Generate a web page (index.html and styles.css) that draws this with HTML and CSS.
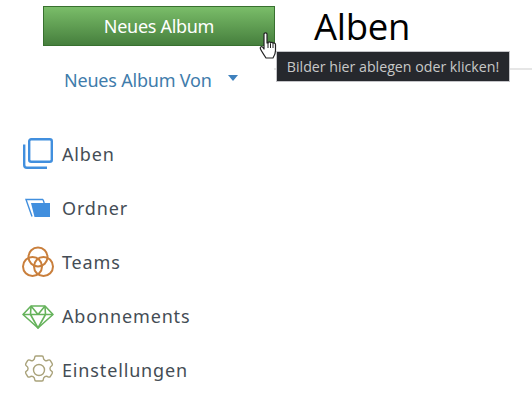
FILE: index.html
```html
<!DOCTYPE html>
<html lang="de">
<head>
  <meta charset="UTF-8">
  <title>Alben</title>
  <link rel="stylesheet" href="styles.css">
</head>
<body>
  <div class="page">
    <aside class="sidebar">
      <button class="new-album">Neues Album</button>
      <div class="new-from">
        <span>Neues Album Von</span>
        <span class="caret"></span>
      </div>
      <nav class="nav">
        <a class="nav-item">
          <svg class="nav-icon" width="32" height="32" viewBox="0 0 32 32" fill="none" stroke="#418fde" stroke-width="2.4">
            <rect x="7.2" y="1.2" width="22.6" height="22.6" rx="2"/>
            <path d="M2.2 6.5V27c0 1.7 1 2.8 2.8 2.8h20"/>
          </svg>
          <span>Alben</span>
        </a>
        <a class="nav-item">
          <svg class="nav-icon" width="32" height="32" viewBox="0 0 32 32">
            <path d="M21 7.500H4l6 17M21 7.500l1.200 3.500" fill="none" stroke="#418fde" stroke-width="1.400"/>
            <path d="M9 11h19v14H12.500z" fill="#418fde"/>
          </svg>
          <span>Ordner</span>
        </a>
        <a class="nav-item">
          <svg class="nav-icon" width="32" height="32" viewBox="0 0 32 32" fill="none" stroke="#c97f3c" stroke-width="2">
            <circle cx="16" cy="11" r="9.500"/>
            <circle cx="10.500" cy="20.500" r="9.500"/>
            <circle cx="21.500" cy="20.500" r="9.500"/>
          </svg>
          <span>Teams</span>
        </a>
        <a class="nav-item">
          <svg class="nav-icon" width="32" height="32" viewBox="0 0 32 32" fill="none" stroke="#66b35c" stroke-width="1.600" stroke-linejoin="round">
            <path d="M9 6h14l8 8.500-15 13.500-15-13.500z"/>
            <path d="M1 14.500h30M9 6l-.5 8.500L16 28l7.500-13.500L23 6M9 6l7 8.500L23 6"/>
          </svg>
          <span>Abonnements</span>
        </a>
        <a class="nav-item">
          <svg class="nav-icon" width="32" height="32" viewBox="0 0 32 32" fill="none" stroke="#a9a27a" stroke-width="1.400" stroke-linejoin="round">
            <circle cx="17" cy="16" r="5.500"/>
            <path d="M14 2c-1 0-1.300.6-1.300 1.500 0 2.500-2.700 4-4.800 2.700-1-.6-1.800-.3-2.300.5l-1.800 3c-.5.900-.2 1.600.6 2.100 2.200 1.200 2.200 4.200 0 5.400-.8.500-1.100 1.200-.6 2.100l1.800 3c.5.800 1.300 1.100 2.300.5 2.100-1.300 4.800.2 4.800 2.700 0 .9.300 1.500 1.300 1.500h6c1 0 1.300-.6 1.300-1.500 0-2.500 2.700-4 4.800-2.700 1 .6 1.800.3 2.300-.5l1.800-3c.5-.9.200-1.600-.6-2.100-2.200-1.200-2.200-4.200 0-5.400.8-.5 1.100-1.200.6-2.100l-1.800-3c-.5-.8-1.300-1.100-2.300-.5-2.100 1.300-4.800-.2-4.800-2.700 0-.9-.3-1.500-1.300-1.500z"/>
          </svg>
          <span>Einstellungen</span>
        </a>
      </nav>
    </aside>
    <main class="content">
      <h1 class="title">Alben</h1>
      <hr class="rule">
    </main>
  </div>

  <div class="tooltip">Bilder hier ablegen oder klicken!</div>
  <svg class="cursor" width="20" height="28" viewBox="0 0 20 28">
    <path d="M5 2c0-1.500 3-1.500 3 0v9l1 0c0-1.500 2.500-1.500 2.500 0 .5-1 2.500-1 2.500.5.500-1 2.500-.5 2.500 1v6c0 3-1.500 6-2.500 7.500H7C5 23 3 20 1.500 17c-1-2 1-3 2-2L5 17z" fill="#fff" stroke="#222" stroke-width="1.200" stroke-linejoin="round"/>
    <path d="M9 11v5M11.500 11.500v4.500M14 12v4" stroke="#222" fill="none"/>
  </svg>
</body>
</html>
```

FILE: styles.css
```css
html, body { margin: 0; padding: 0; background: #fff; }
body { width: 532px; height: 404px; overflow: hidden; position: relative; font-family: "Noto Sans", sans-serif; }
.page { display: flex; }
.sidebar { width: 274px; padding: 6px 0 0 22px; box-sizing: border-box; flex-shrink: 0; }
.new-album { display: block; width: 232px; height: 40px; margin-left: 21px; padding: 0; border: 1px solid #38702f; background: linear-gradient(#7abd69, #467f3d); color: #fff; font-family: "Noto Sans", sans-serif; font-size: 18px; letter-spacing: -0.3px; }
.new-from { display: flex; align-items: center; gap: 16px; margin: 22px 0 0 42px; color: #3f7cab; font-size: 18px; letter-spacing: -0.2px; line-height: 24px; }
.caret { border: 5px solid transparent; border-top: 6px solid #3f81bd; border-bottom: 0; margin-top: -4px; }
.nav { margin-top: 46px; display: flex; flex-direction: column; gap: 22px; }
.nav-item { display: flex; align-items: center; gap: 8px; height: 32px; color: #444d55; font-size: 18px; letter-spacing: 0.85px; white-space: nowrap; }
.nav-icon { flex-shrink: 0; }
.content { flex: 1; padding: 0 0 0 40px; }
.title { margin: 0; font-family: "Open Sans", sans-serif; font-weight: 400; font-size: 36.5px; letter-spacing: -0.3px; line-height: 52px; color: #000; }
.rule { margin: 16px 0 0 -40px; border: 0; border-top: 2px solid #e6e6e6; }
.tooltip { position: absolute; left: 276px; top: 51px; width: 234px; height: 31px; box-sizing: border-box; border: 1px solid #c4c4c8; background: #26282d; color: #c8c8c8; font-family: "Open Sans", sans-serif; font-size: 14.2px; line-height: 29px; text-align: center; white-space: nowrap; }
.cursor { position: absolute; left: 259px; top: 32px; }
```
